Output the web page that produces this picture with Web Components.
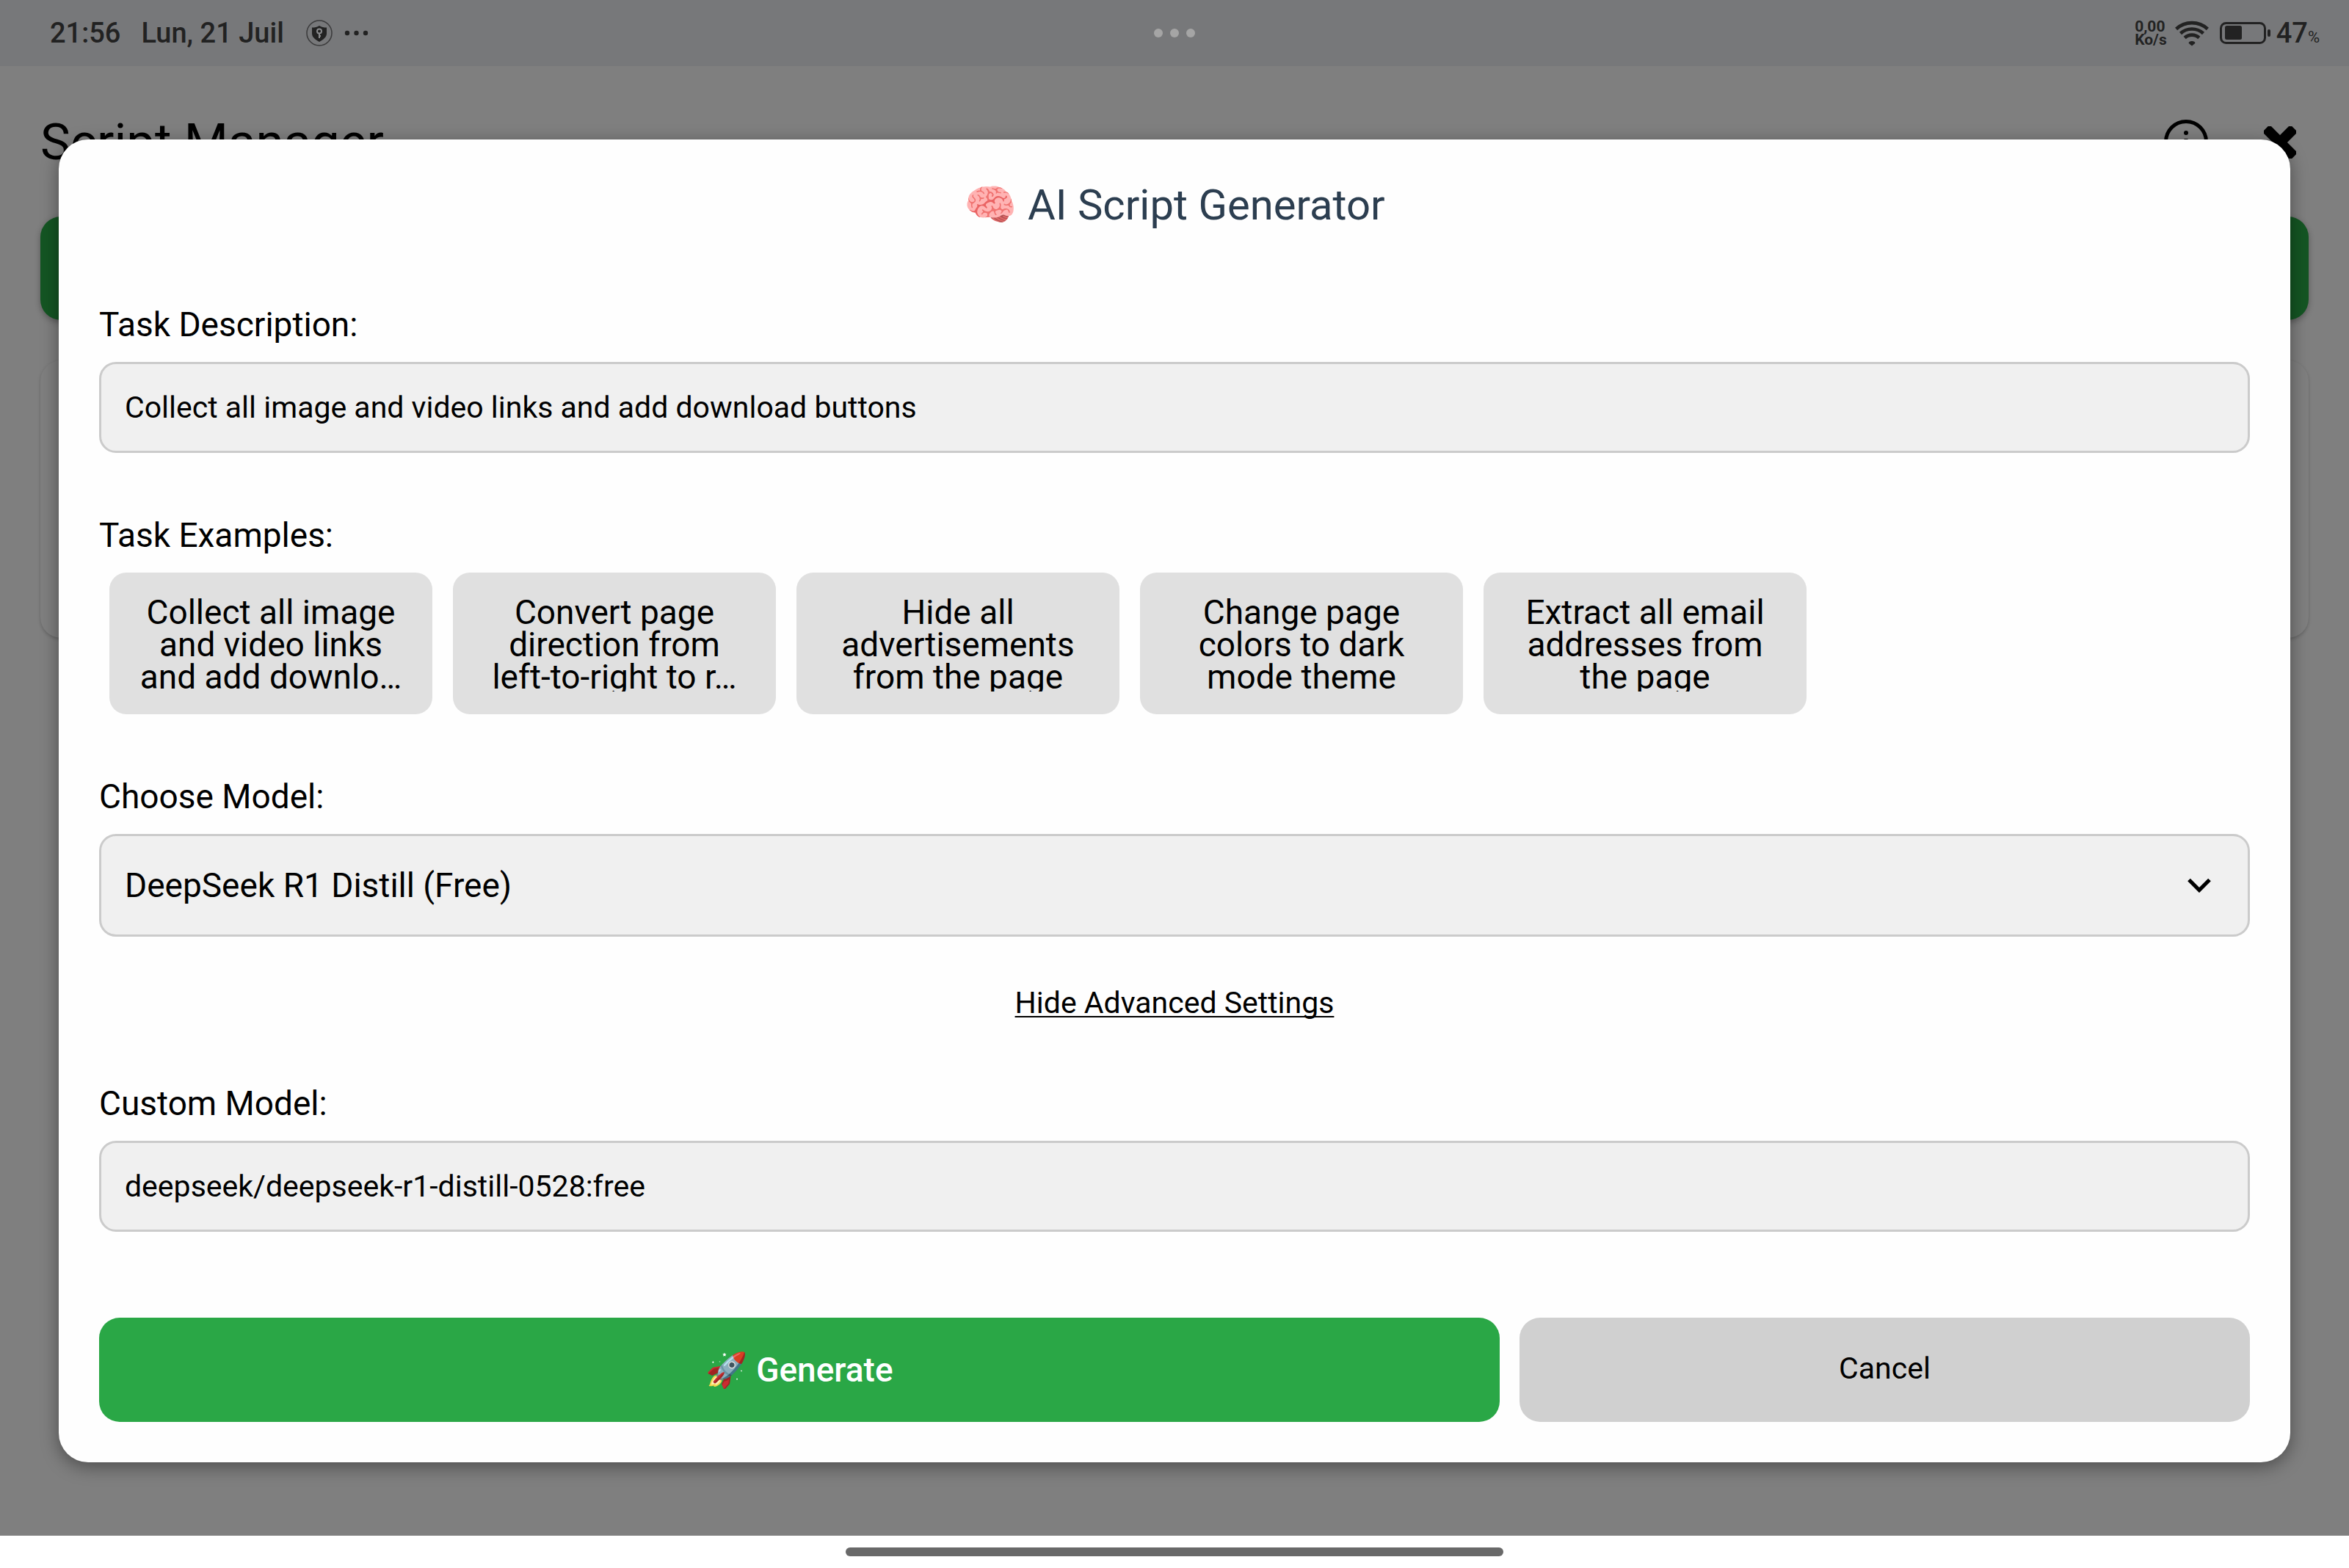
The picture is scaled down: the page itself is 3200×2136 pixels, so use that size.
<!DOCTYPE html>
<html lang="en">
<head>
<meta charset="utf-8">
<title>AI Script Generator</title>
<style>
  html, body { margin: 0; height: 100%; }
  body { font-family: Roboto, "Noto Sans", "Noto Color Emoji", sans-serif; color: #000; background: #fff; }
</style>
</head>
<body>
<app-shell>
  <status-bar slot="status"></status-bar>
  <script-manager></script-manager>
  <modal-card slot="modal" heading="🧠 AI Script Generator">
    <text-field label="Task Description:" value="Collect all image and video links and add download buttons"></text-field>
    <example-list label="Task Examples:">
      <example-chip>Collect all image
and video links
and add downlo…</example-chip>
      <example-chip>Convert page
direction from
left-to-right to r…</example-chip>
      <example-chip>Hide all
advertisements
from the page</example-chip>
      <example-chip>Change page
colors to dark
mode theme</example-chip>
      <example-chip>Extract all email
addresses from
the page</example-chip>
    </example-list>
    <select-field label="Choose Model:" value="DeepSeek R1 Distill (Free)"></select-field>
    <toggle-link>Hide Advanced Settings</toggle-link>
    <text-field label="Custom Model:" value="deepseek/deepseek-r1-distill-0528:free"></text-field>
    <action-button slot="actions" kind="primary">🚀 Generate</action-button>
    <action-button slot="actions" kind="secondary">Cancel</action-button>
  </modal-card>
</app-shell>

<script>
const define = (name, render) => customElements.define(name, class extends HTMLElement {
  constructor() {
    super();
    this.attachShadow({ mode: 'open' });
  }
  connectedCallback() {
    this.shadowRoot.innerHTML = '<style>*{box-sizing:border-box}</style>' + render(this);
  }
});

define('app-shell', () => `
  <style>
    :host { display: flex; flex-direction: column; height: 100vh; overflow: hidden; }
    main { position: relative; flex: 1; min-height: 0; background: #7f7f7f; overflow: hidden; }
    .overlay { position: absolute; inset: 0; padding: 100px 80px; }
    footer { height: 44px; flex: none; display: flex; align-items: center; justify-content: center; background: #fff; }
    .pill { width: 28%; height: 12px; border-radius: 6px; background: #696969; }
  </style>
  <slot name="status"></slot>
  <main><slot></slot><div class="overlay"><slot name="modal"></slot></div></main>
  <footer><div class="pill"></div></footer>`);

define('status-bar', () => `
  <style>
    :host { display: grid; grid-template-columns: 1fr auto 1fr; align-items: center; flex: none; height: 90px;
      background: #77787a; color: #222; font-size: 38px; font-weight: 500; line-height: 48px; }
    div { display: flex; align-items: center; }
    .left { gap: 28px; padding-left: 68px; }
    .icons { gap: 16px; margin-left: 2px; }
    .right { justify-content: flex-end; padding-right: 40px; }
    .rate { display: block; font-size: 21px; line-height: 18px; font-weight: 700; margin-right: 11px; white-space: pre-line; }
    .battery { margin: 0 7px 0 15px; }
    small { font-size: 22px; align-self: flex-end; line-height: 36px; font-weight: 400; }
    svg { display: block; flex: none; }
  </style>
  <div class="left">
    <span>21:56</span><span>Lun, 21 Juil</span>
    <div class="icons">
      <svg width="36" height="36" viewBox="0 0 36 36">
        <circle cx="18" cy="18" r="17" fill="none" stroke="#3a3a3b" stroke-width="1.500"/>
        <path d="M18 8c3 2 6 2.500 10 2.500v8c0 5-4 8-10 11.500C12 26.500 8 23.500 8 18.500v-8c4 0 7-.5 10-2.500z" fill="#222"/>
        <circle cx="18" cy="15.500" r="3" fill="none" stroke="#8a8b8d" stroke-width="2"/>
        <path d="M18 18.500v6.500M18 22h2" stroke="#8a8b8d" stroke-width="2"/>
      </svg>
      <svg width="34" height="8" viewBox="0 0 34 8" fill="#222"><circle cx="4" cy="4" r="3.200"/><circle cx="16.500" cy="4" r="3.200"/><circle cx="29" cy="4" r="3.200"/></svg>
    </div>
  </div>
  <svg width="56" height="12" viewBox="0 0 56 12" fill="#a5a5a5"><circle cx="6" cy="6" r="6"/><circle cx="28" cy="6" r="6"/><circle cx="50" cy="6" r="6"/></svg>
  <div class="right">
    <span class="rate">0,00
Ko/s</span>
    <svg width="46" height="36" viewBox="0 0 46 36" fill="none" stroke="#222" stroke-width="4.600">
      <path d="M1.600 12.500C13.500 1.300 32.500 1.300 44.400 12.500"/>
      <path d="M7.500 18.500C16 10.500 30 10.500 38.500 18.500"/>
      <path d="M13.200 24.500C18.500 19.300 27.500 19.300 32.800 24.500"/>
      <path d="M23 35.500l-4.300-3.600c-.8-3.900 9.400-3.900 8.600 0z" fill="#222" stroke="none"/>
    </svg>
    <svg class="battery" width="70" height="30" viewBox="0 0 70 30">
      <rect x="1.500" y="1.500" width="60" height="27" rx="7" fill="none" stroke="#222" stroke-width="3"/>
      <rect x="7" y="5" width="23" height="19" rx="2.500" fill="#222"/>
      <rect x="65" y="10" width="4" height="10" rx="2" fill="#222"/>
    </svg>
    <span>47</span><small>%</small>
  </div>`);

define('script-manager', () => `
  <style>
    :host { display: block; padding: 62px 55px 0; }
    header { display: flex; justify-content: space-between; align-items: center; height: 84px; }
    h1 { margin: 0; font-size: 69px; font-weight: 400; line-height: 80px; }
    .tools { display: flex; align-items: center; gap: 76px; margin-right: 17px; }
    button { display: block; border: 0; padding: 0; background: none; }
    svg { display: block; }
    .add { width: 100%; height: 141px; margin-top: 59px; border-radius: 28px; background: #145523; box-shadow: 0 3px 8px rgba(0,0,0,.3); }
    .card { height: 378px; margin-top: 55px; border-radius: 28px; background: #7f7f7f; box-shadow: 0 2px 4px rgba(0,0,0,.2); }
  </style>
  <header>
    <h1>Script Manager</h1>
    <div class="tools">
      <button type="button" aria-label="Info">
        <svg width="60" height="84" viewBox="0 0 60 84"><circle cx="30" cy="41" r="27.500" fill="none" stroke="#000" stroke-width="5"/><circle cx="30" cy="29" r="3"/><path d="M30 37v20" stroke="#000" stroke-width="5"/></svg>
      </button>
      <button type="button" aria-label="Close">
        <svg width="44" height="44" viewBox="0 0 44 44"><g transform="rotate(45 22 22)"><rect x="-5" y="15" width="54" height="14" rx="3"/><rect x="15" y="-5" width="14" height="54" rx="3"/></g></svg>
      </button>
    </div>
  </header>
  <button class="add" type="button" aria-label="Add"></button>
  <div class="card"></div>`);

define('modal-card', el => `
  <style>
    :host { display: block; padding: 55px; border-radius: 40px; background: #fefefe; box-shadow: 0 6px 24px rgba(0,0,0,.4); }
    h2 { margin: 0 0 102px; text-align: center; font-size: 58px; line-height: 68px; font-weight: 400; color: #2c3e50; }
    form { display: flex; flex-direction: column; gap: 85px; }
    .actions { display: grid; grid-template-columns: 1908fr 995fr; gap: 27px; margin-top: 32px; }
  </style>
  <h2>${el.getAttribute('heading')}</h2>
  <form>
    <slot></slot>
    <div class="actions"><slot name="actions"></slot></div>
  </form>`);

define('text-field', el => `
  <style>
    :host { display: flex; flex-direction: column; gap: 24px; }
    label { font-size: 46px; line-height: 54px; }
    input { width: 100%; height: 124px; padding: 0 32px; border: 3px solid #cbcbcb; border-radius: 23px; background: #f0f0f0;
      font: inherit; font-size: 41px; color: #000; outline: 0; }
  </style>
  <label for="f">${el.getAttribute('label')}</label>
  <input id="f" type="text" value="${el.getAttribute('value')}">`);

define('select-field', el => `
  <style>
    :host { display: flex; flex-direction: column; gap: 24px; }
    label { font-size: 46px; line-height: 54px; }
    .box { display: grid; align-items: center; }
    .box > * { grid-area: 1 / 1; }
    select { appearance: none; width: 100%; height: 140px; padding: 0 32px; border: 3px solid #cbcbcb; border-radius: 23px;
      background: #f0f0f0; font: inherit; font-size: 46px; color: #000; outline: 0; }
    svg { justify-self: end; margin-right: 53px; pointer-events: none; }
  </style>
  <label for="f">${el.getAttribute('label')}</label>
  <div class="box">
    <select id="f"><option>${el.getAttribute('value')}</option></select>
    <svg width="32" height="20" viewBox="0 0 32 20"><path d="M2 2.500L16 16.500L30 2.500" fill="none" stroke="#000" stroke-width="5.200"/></svg>
  </div>`);

define('example-list', el => `
  <style>
    :host { display: flex; flex-direction: column; gap: 24px; }
    .label { font-size: 46px; line-height: 54px; }
    .row { display: flex; gap: 28px; padding-left: 14px; }
  </style>
  <div class="label" id="l">${el.getAttribute('label')}</div>
  <div class="row" role="group" aria-labelledby="l"><slot></slot></div>`);

define('example-chip', () => `
  <style>
    :host { display: block; width: 440px; flex: none; }
    button { display: block; width: 100%; height: 193px; padding: 32px 28px 31px; border: 0; border-radius: 23px; background: #e0e0e0; color: #000; font: inherit; }
    span { display: block; height: 130px; overflow: hidden; font-size: 46px; line-height: 44px; white-space: pre-line; }
  </style>
  <button type="button"><span><slot></slot></span></button>`);

define('toggle-link', () => `
  <style>
    :host { display: block; margin-top: -20px; text-align: center; font-size: 41px; line-height: 50px; }
    a { color: #000; text-decoration: underline; text-decoration-thickness: 2px; text-underline-offset: 4px; text-decoration-skip-ink: none; }
  </style>
  <a href="#advanced"><slot></slot></a>`);

define('action-button', () => `
  <style>
    :host { display: block; }
    button { display: block; width: 100%; height: 142px; padding: 0 0 4px; border: 0; border-radius: 28px; font: inherit; font-size: 41px; background: #d0d0d0; color: #000; }
    :host([kind="primary"]) button { padding: 0; background: #2aa746; color: #fff; font-size: 46px; font-weight: 500; }
  </style>
  <button type="button"><slot></slot></button>`);
</script>
</body>
</html>
